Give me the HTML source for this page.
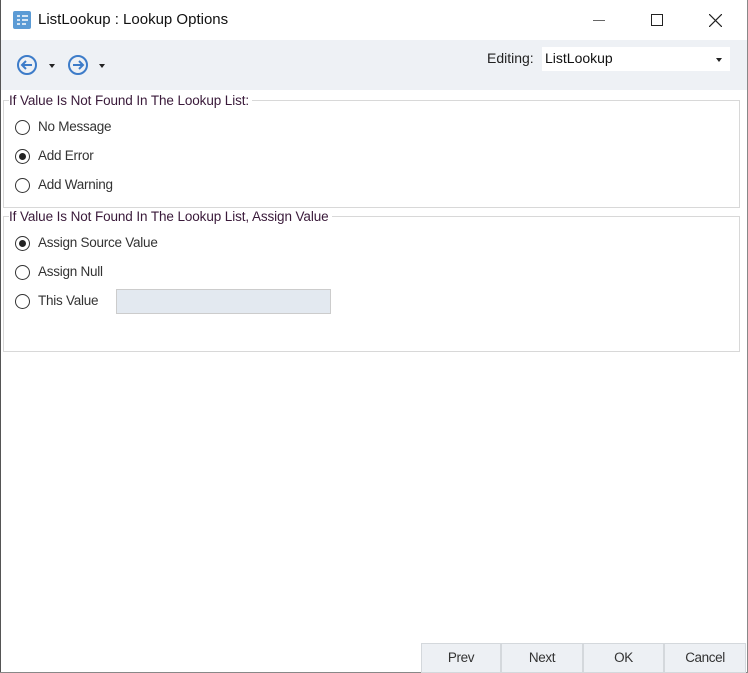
<!DOCTYPE html>
<html><head><style>
body{margin:0;width:748px;height:673px;background:#fff;position:relative;overflow:hidden;font-family:"Liberation Sans",sans-serif;font-size:13.5px;color:#222}
.a{position:absolute}
.rad{position:absolute;width:15px;height:15px;border:1px solid #333;border-radius:50%;box-sizing:border-box;background:#fff}
.rad.on::after{content:"";position:absolute;left:3px;top:3px;width:7px;height:7px;border-radius:50%;background:#222}
.lbl{position:absolute;font-size:13.5px;letter-spacing:-0.25px;color:#333}
.grp{position:absolute;border:1px solid #d8d8d8;box-sizing:border-box}
.leg{position:absolute;background:#fff;color:#3a1a3a;padding:0 3px 0 0;font-size:13.5px;letter-spacing:-0.1px}
.btn{position:absolute;top:643px;height:30px;background:#edf0f4;border:1px solid #d4d8dc;box-sizing:border-box;text-align:center;line-height:28px;font-size:13.5px;letter-spacing:-0.4px;color:#333}
</style></head><body>
<div class="a" style="left:0;top:0;width:1px;height:673px;background:#555"></div>
<div class="a" style="right:0;top:0;width:1px;height:673px;background:#888"></div>
<div class="a" style="left:0;bottom:0;width:748px;height:1px;background:#888"></div>
<svg class="a" style="left:13px;top:11px" width="19" height="19"><rect x="0" y="0" width="18" height="18" rx="2" fill="#5b9bd5"/><path d="M4 5h3M9 5h6M4 9h3M9 9h6M4 13h3M9 13h4" stroke="#fff" stroke-width="1.5"/></svg>
<div class="a" style="left:38px;top:11px;font-size:15px;color:#111">ListLookup : Lookup Options</div>
<div class="a" style="left:593px;top:20px;width:12px;height:1px;background:#666"></div>
<div class="a" style="left:651px;top:14px;width:12px;height:12px;border:1px solid #222;box-sizing:border-box"></div>
<svg class="a" style="left:709px;top:14px" width="13" height="13"><path d="M0 0L13 13M13 0L0 13" stroke="#222" stroke-width="1.2"/></svg>
<div class="a" style="left:1px;top:40px;width:746px;height:50px;background:#eef1f5"></div>
<svg class="a" style="left:16px;top:54px" width="22" height="22"><circle cx="11" cy="11" r="9" fill="none" stroke="#3d7cc9" stroke-width="2"/><path d="M16 11H6M10 7L6 11L10 15" fill="none" stroke="#3d7cc9" stroke-width="2"/></svg>
<div class="a" style="left:49px;top:64px;border:3px solid transparent;border-top:4px solid #222"></div>
<svg class="a" style="left:67px;top:54px" width="22" height="22"><circle cx="11" cy="11" r="9" fill="none" stroke="#3d7cc9" stroke-width="2"/><path d="M6 11H16M12 7L16 11L12 15" fill="none" stroke="#3d7cc9" stroke-width="2"/></svg>
<div class="a" style="left:99px;top:64px;border:3px solid transparent;border-top:4px solid #222"></div>
<div class="a" style="left:487px;top:50px;font-size:14px;color:#222">Editing:</div>
<div class="a" style="left:542px;top:47px;width:188px;height:24px;background:#fff"></div>
<div class="a" style="left:545px;top:50px;font-size:14px;color:#111">ListLookup</div>
<div class="a" style="left:716px;top:58px;border:3px solid transparent;border-top:4px solid #222"></div>
<div class="grp" style="left:3px;top:100px;width:737px;height:108px"></div>
<div class="leg" style="left:9px;top:93px">If Value Is Not Found In The Lookup List:</div>
<div class="rad" style="left:15px;top:120px"></div><div class="lbl" style="left:38px;top:119px">No Message</div>
<div class="rad on" style="left:15px;top:149px"></div><div class="lbl" style="left:38px;top:148px">Add Error</div>
<div class="rad" style="left:15px;top:178px"></div><div class="lbl" style="left:38px;top:177px">Add Warning</div>
<div class="grp" style="left:3px;top:216px;width:737px;height:136px"></div>
<div class="leg" style="left:9px;top:209px">If Value Is Not Found In The Lookup List, Assign Value</div>
<div class="rad on" style="left:15px;top:236px"></div><div class="lbl" style="left:38px;top:235px">Assign Source Value</div>
<div class="rad" style="left:15px;top:265px"></div><div class="lbl" style="left:38px;top:264px">Assign Null</div>
<div class="rad" style="left:15px;top:294px"></div><div class="lbl" style="left:38px;top:293px">This Value</div>
<div class="a" style="left:116px;top:289px;width:215px;height:25px;background:#e3e9f0;border:1px solid #ccc;box-sizing:border-box"></div>
<div class="btn" style="left:421px;width:80px">Prev</div>
<div class="btn" style="left:501px;width:82px">Next</div>
<div class="btn" style="left:583px;width:81px">OK</div>
<div class="btn" style="left:664px;width:82px">Cancel</div>
</body></html>
